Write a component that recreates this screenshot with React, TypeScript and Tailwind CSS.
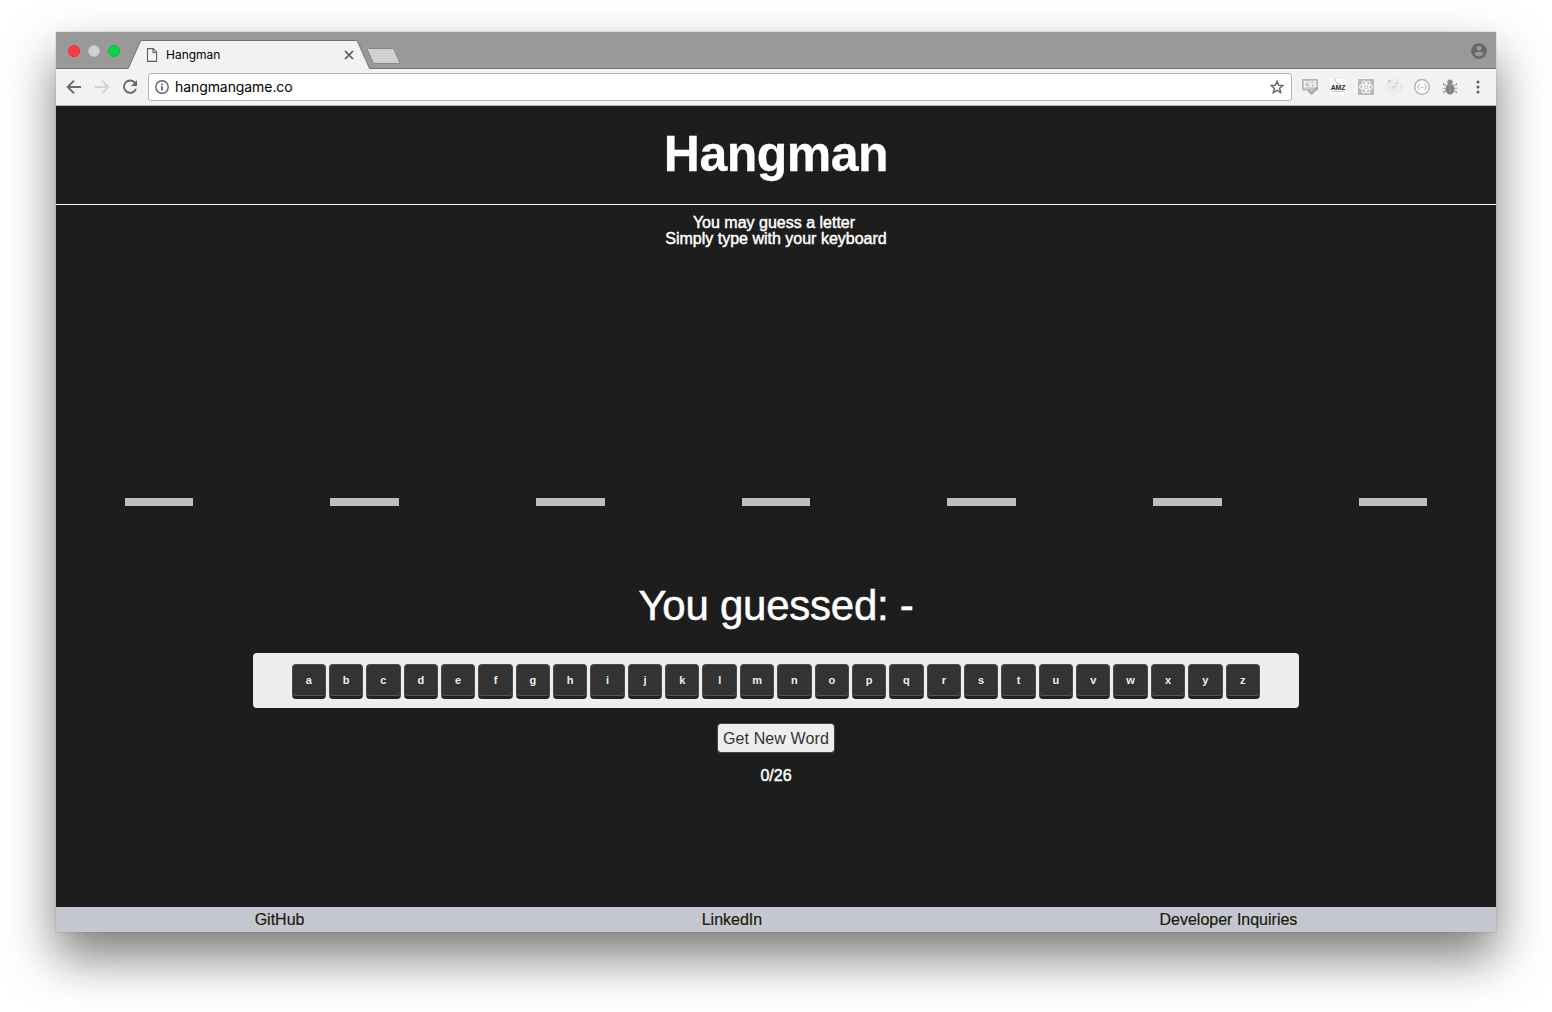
import React from 'react';

const letters = 'abcdefghijklmnopqrstuvwxyz'.split('');

function TabStrip() {
  return (
    <div className="relative flex h-[37px] items-center border-b border-[#727272] bg-[#999999] pr-2 pl-3">
      <div className="mt-[2px] flex gap-2">
        <span className="size-3 rounded-full border border-[#f5242e] bg-[#ff3b44]" />
        <span className="size-3 rounded-full border border-[#bdbdbd] bg-[#d1d1d1]" />
        <span className="size-3 rounded-full border border-[#0cbd36] bg-[#07d541]" />
      </div>
      <svg className="absolute top-0 left-[70px]" width="280" height="37" viewBox="0 0 280 37">
        <path d="M0 37L2.2 36.5 14.5 9.2Q14.8 8.5 15.6 8.5H230.2Q231 8.5 231.4 9.2L243.6 36.5 246 37Z" fill="#f2f2f2" />
        <path d="M1 36.5H2.2L14.5 9.2Q14.8 8.5 15.6 8.5H230.2Q231 8.5 231.4 9.2L243.6 36.5H246" fill="none" stroke="#6f6f6f" />
        <path d="M242.3 16.5H266.5Q267.6 16.5 268 17.4L273.6 29.8Q274 31.5 272.8 31.5H248.7Q247.5 31.5 247 30.3L241.4 18Q241 16.5 242.3 16.5Z" fill="#d0d0d0" stroke="#858585" />
      </svg>
      <div className="relative ml-[26px] flex h-full w-[208px] items-center pt-[9px]">
        <svg width="12" height="14" viewBox="0 0 12 14" fill="none" stroke="#5f5f5f" strokeWidth="1.1">
          <path d="M1.5.6H7.2L10.6 4.2V13.4H1.5ZM7 .8V4.5H10.4" />
        </svg>
        <span className="ml-2 font-['Inter','Liberation_Sans',sans-serif] text-xs text-black">Hangman</span>
        <svg className="ml-auto" width="10" height="10" viewBox="0 0 10 10" stroke="#555" strokeWidth="1.7">
          <path d="M1 1L9 9M9 1L1 9" />
        </svg>
      </div>
      <svg className="mt-[2px] ml-auto" width="18" height="18" viewBox="0 0 24 24" fill="#666">
        <path d="M12 1.500a10.500 10.500 0 1 0 0 21 10.500 10.500 0 0 0 0-21Zm0 3.500a3.300 3.300 0 1 1 0 6.600A3.300 3.300 0 0 1 12 5Zm0 14.200a7.200 7.200 0 0 1-6-3.200c0-2 4-3.100 6-3.100s6 1.100 6 3.100a7.200 7.200 0 0 1-6 3.200Z" />
      </svg>
    </div>
  );
}

function Extensions() {
  return (
    <div className="flex items-center gap-3">
      <svg width="16" height="16" viewBox="0 0 16 16">
        <path d="M.5.5H15.500V11H.5Z" fill="#c6c6c6" stroke="#b2b2b2" />
        <g fill="none" stroke="#f8f8f8" strokeWidth="1.300">
          <path d="M5.500 3H2.600V7.700H5.500M9.800 3H7.200V5.300H9.300V7.700H6.600M14 3H11.400V5.300H13.500V7.700H10.800" />
        </g>
        <path d="M6.300 11.300L9.600 14.300 15.300 8.800" fill="none" stroke="#a6a6a6" strokeWidth="2.400" />
      </svg>
      <div className="relative flex size-4 flex-col items-center justify-center bg-white pt-[2px] font-['Liberation_Sans',sans-serif]">
        <svg className="absolute top-0 left-[4px]" width="6" height="6" viewBox="0 0 6 6" fill="none" stroke="#bbb">
          <path d="M1 0V2L4.500 5" />
          <path d="M3 4.800H6" stroke="#e6a74a" />
        </svg>
        <span className="text-[7px] leading-[7px] font-bold tracking-[-0.200px] text-[#222]">AMZ</span>
        <span className="h-[1px] w-[13px] bg-[#c6c6c6]" />
      </div>
      <svg width="16" height="16" viewBox="0 0 16 16">
        <path d="M0 0H16V16H0Z" fill="#b9b9b9" />
        <g fill="none" stroke="#f5f5f5" strokeWidth="1.100">
          <ellipse cx="8" cy="8" rx="6.500" ry="2.600" />
          <ellipse cx="8" cy="8" rx="6.500" ry="2.600" transform="rotate(60 8 8)" />
          <ellipse cx="8" cy="8" rx="6.500" ry="2.600" transform="rotate(120 8 8)" />
        </g>
        <circle cx="8" cy="8" r="1.400" fill="#f5f5f5" />
      </svg>
      <svg width="16" height="16" viewBox="0 0 16 16" fill="none" stroke="#dedede">
        <circle cx="8" cy="8" r="7.200" />
        <circle cx="8" cy="8" r="4" />
        <circle cx="8" cy="8" r="2" fill="#dadada" stroke="none" />
        <circle cx="3.500" cy="2.200" r="1.300" fill="#c8c8c8" stroke="none" />
        <circle cx="11" cy="4" r="1.100" fill="#c8c8c8" stroke="none" />
      </svg>
      <svg width="16" height="16" viewBox="0 0 16 16" fill="none" stroke="#a6a6a6">
        <circle cx="8" cy="8" r="7.300" fill="#fff" strokeWidth="1.200" />
        <path d="M5.500 5Q4.400 5 4.400 6.500 4.400 8 3.500 8 4.400 8 4.400 9.500 4.400 11 5.500 11M10.500 5Q11.600 5 11.600 6.500 11.600 8 12.500 8 11.600 8 11.600 9.500 11.600 11 10.500 11" />
        <path d="M6.500 8.300H10" strokeDasharray="1 .6" />
      </svg>
      <svg width="16" height="16" viewBox="0 0 16 16">
        <path d="M1.500 4V6H4.500L6 7.500M14.500 4V6H11.500L10 7.500M.8 9.300H15.200M1.800 14.500V12.300H5M14.200 14.500V12.300H11" fill="none" stroke="#a0a0a0" strokeWidth="1.100" />
        <circle cx="8" cy="3.300" r="2.700" fill="#8d8d8d" />
        <ellipse cx="8" cy="10.300" rx="4.500" ry="5.200" fill="#828282" />
        <path d="M8 6V15" stroke="#979797" />
      </svg>
      <svg width="16" height="16" viewBox="0 0 16 16" fill="#5f5f5f">
        <circle cx="8" cy="3" r="1.500" />
        <circle cx="8" cy="8" r="1.500" />
        <circle cx="8" cy="13" r="1.500" />
      </svg>
    </div>
  );
}

function Toolbar() {
  return (
    <div className="flex h-[37px] items-center border-b border-[#b4b4b4] bg-[#f2f2f2] pr-[10px] pl-[10px]">
      <div className="flex gap-3">
        <svg width="16" height="16" viewBox="0 0 16 16" fill="none" stroke="#6a6a6a" strokeWidth="1.900">
          <path d="M15 8H2.500M8 1.700L1.700 8 8 14.300" />
        </svg>
        <svg width="16" height="16" viewBox="0 0 16 16" fill="none" stroke="#d3d3d3" strokeWidth="1.900">
          <path d="M1 8H13.500M8 1.700L14.300 8 8 14.300" />
        </svg>
        <svg width="16" height="16" viewBox="0 0 16 16">
          <path d="M13.300 4.200A6.200 6.200 0 1 0 14 9.700" fill="none" stroke="#6a6a6a" strokeWidth="1.900" />
          <path d="M15 1V7H9Z" fill="#6a6a6a" />
        </svg>
      </div>
      <div className="ml-[10px] flex h-7 w-[1144px] items-center rounded-[3px] border border-[#b3b3b3] bg-white pr-[7px] pl-[6px]">
        <svg width="14" height="14" viewBox="0 0 14 14" fill="none" stroke="#5f5f5f" strokeWidth="1.400">
          <circle cx="7" cy="7" r="6.200" />
          <path d="M7 6.200V10.500M7 3.500V5" strokeWidth="1.800" />
        </svg>
        <span className="ml-[6px] font-['Inter','Liberation_Sans',sans-serif] text-sm tracking-[-0.080px] text-black">hangmangame.co</span>
        <svg className="ml-auto" width="14" height="14" viewBox="0 0 14 14" fill="none" stroke="#5f5f5f" strokeWidth="1.400">
          <path d="M7 1.300L8.600 5.200 12.900 5.500 9.600 8.200 10.700 12.500 7 10.200 3.300 12.500 4.400 8.200 1.100 5.500 5.400 5.200Z" />
        </svg>
      </div>
      <div className="ml-[10px]">
        <Extensions />
      </div>
    </div>
  );
}

export default function App() {
  return (
    <div className="h-[1012px] w-[1552px] overflow-hidden bg-white px-14 pt-8 font-['Liberation_Sans',Arial,sans-serif]">
      <div className="flex h-[900px] w-[1440px] flex-col rounded-t-[1px] shadow-[0_0_1px_rgba(0,0,0,0.6),0_25px_50px_rgba(0,0,0,0.52)]">
        <TabStrip />
        <Toolbar />
        <main className="flex grow flex-col items-center bg-[#1d1d1d] text-white">
          <header className="flex h-[99px] w-full justify-center border-b border-white pt-5">
            <h1 className="text-[50px] leading-[57px] font-bold tracking-[-0.500px] [-webkit-text-stroke:0.300px_white]">Hangman</h1>
          </header>
          <p className="mt-[10px] text-center text-base leading-4 [-webkit-text-stroke:0.450px_white]">
            <span className="mr-1">You may guess a letter</span>
            <br />
            Simply type with your keyboard
          </p>
          <div className="mt-[251px] flex w-full justify-around">
            {[0, 1, 2, 3, 4, 5, 6].map((slot) => (
              <span key={slot} className="h-2 w-[68.570px] bg-[#bebebe]" />
            ))}
          </div>
          <p className="mt-[76px] text-[42px] leading-[48px] tracking-[-0.250px] [-webkit-text-stroke:0.500px_white]">You guessed: -</p>
          <div className="mt-[23px] flex h-[55px] w-[1046px] justify-center gap-[3px] rounded-[4px] bg-[#eeeeee] pt-[11px] pr-[0.600px]">
            {letters.map((letter) => (
              <kbd
                key={letter}
                className="flex h-[35px] w-[34.360px] justify-center rounded-[4px] border border-b-[3px] border-[#4b4b4b] border-b-[#222222] bg-[#333333] pt-[7px] font-['Liberation_Sans',sans-serif] text-[11px] leading-4 font-bold text-[#eeeeee] shadow-[inset_0_-1px_0_#555555]"
              >
                {letter}
              </kbd>
            ))}
          </div>
          <button className="mt-[15px] flex h-[30px] w-[118px] items-center justify-center rounded-[4px] border border-[#444444] bg-[#eeeeee] pt-[2px] text-base leading-7 tracking-[0.120px] whitespace-nowrap text-[#333333] shadow-[0_3px_2px_#222222]">
            Get New Word
          </button>
          <p className="mt-[15px] text-base leading-4 [-webkit-text-stroke:0.450px_white]">0/26</p>
        </main>
        <footer className="flex h-[25px] shrink-0 items-center justify-around bg-[#c4c7d0] text-base leading-[25px] text-[#1d1a0a] [-webkit-text-stroke:0.200px_#1d1a0a]">
          <span>GitHub</span>
          <span>LinkedIn</span>
          <span>Developer Inquiries</span>
        </footer>
      </div>
    </div>
  );
}
